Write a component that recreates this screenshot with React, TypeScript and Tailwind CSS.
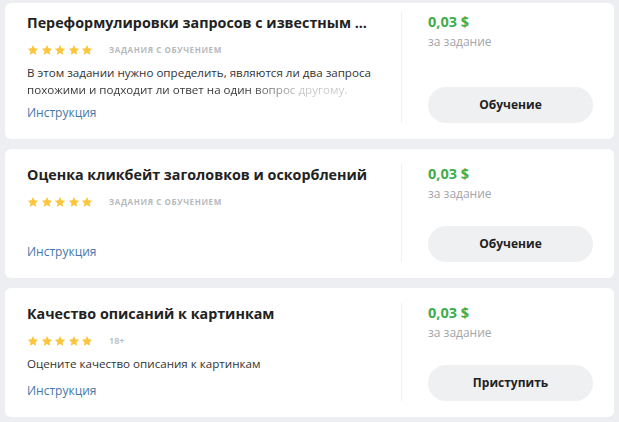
const TASKS = [
  {
    title: "Переформулировки запросов с известным ...",
    tag: "ЗАДАНИЯ С ОБУЧЕНИЕМ",
    desc: ["В этом задании нужно определить, являются ли два запроса", "похожими и подходит ли ответ на один вопрос другому."],
    action: "Обучение",
    first: true,
  },
  {
    title: "Оценка кликбейт заголовков и оскорблений",
    tag: "ЗАДАНИЯ С ОБУЧЕНИЕМ",
    desc: [],
    action: "Обучение",
  },
  {
    title: "Качество описаний к картинкам",
    tag: "18+",
    desc: ["Оцените качество описания к картинкам"],
    action: "Приступить",
  },
];

function Star() {
  return (
    <svg width="12" height="12" viewBox="0 0 24 24">
      <path
        d="M12 1.8l3.1 6.6 7.2.9-5.3 5 1.4 7.1L12 17.9l-6.4 3.5 1.4-7.1-5.3-5 7.2-.9z"
        fill="#fbc53d"
      />
    </svg>
  );
}

type Task = (typeof TASKS)[number] & { first?: boolean };

function TaskCard({ task }: { task: Task }) {
  const isAge = task.tag === "18+";
  return (
    <div className={`bg-white rounded-md pl-[22px] pr-[22px] pb-[16px] ${task.first ? "pt-[9px]" : "pt-[15px]"}`}>
      <div className="flex min-h-[98px]">
        {/* Left */}
        <div className="flex-1 min-w-0 flex flex-col pr-[16px]">
          <div className="text-[14.3px] leading-[22px] font-bold text-[#222] whitespace-nowrap">
            {task.title}
          </div>
          <div className="mt-[10px] h-[12px] flex items-center">
            <div className="flex gap-[1.5px]">
              {[0, 1, 2, 3, 4].map((i) => <Star key={i} />)}
            </div>
            {isAge ? (
              <span className="ml-[16px] text-[9px] font-semibold text-[#b5b7ba]">{task.tag}</span>
            ) : (
              <span className="ml-[16px] text-[8px] font-bold tracking-[0.6px] text-[#b7b9bd]">{task.tag}</span>
            )}
          </div>
          {task.desc.length > 0 && (
            <div className="mt-[8px] pb-[5px] text-[11.6px] leading-[17px] text-[#333]">
              {task.desc.map((line, i) =>
                i === task.desc.length - 1 && task.desc.length > 1 ? (
                  <div key={i}
                    className="whitespace-nowrap w-fit bg-[linear-gradient(to_right,#333_68%,#c8c8c8_86%)] bg-clip-text text-transparent">
                    {line}
                  </div>
                ) : (
                  <div key={i} className="whitespace-nowrap">{line}</div>
                )
              )}
            </div>
          )}
          <a className="mt-auto text-[12px] leading-[20px] text-[#4577aa]">Инструкция</a>
        </div>

        {/* Right */}
        <div className="w-[191px] shrink-0 border-l border-[#eef0f2] pl-[26px] flex flex-col">
          <div className="text-[14.5px] leading-[20px] font-bold text-[#3fae4a]">0,03 $</div>
          <div className="mt-[2px] text-[12px] leading-[16px] text-[#a3a5a8]">за задание</div>
          <button className="mt-auto h-[36px] w-[165px] rounded-full bg-[#eff0f2] text-[12px] font-bold text-[#222]">
            {task.action}
          </button>
        </div>
      </div>
    </div>
  );
}

export default function App() {
  return (
    <div className="w-[619px] h-[422px] overflow-hidden bg-[#eceef1] px-[5px] pt-[3px] flex flex-col gap-[10px]"
      style={{ fontFamily: '"Open Sans", "Noto Sans", sans-serif' }}>
      {TASKS.map((t, i) => (
        <TaskCard key={i} task={t} />
      ))}
    </div>
  );
}
